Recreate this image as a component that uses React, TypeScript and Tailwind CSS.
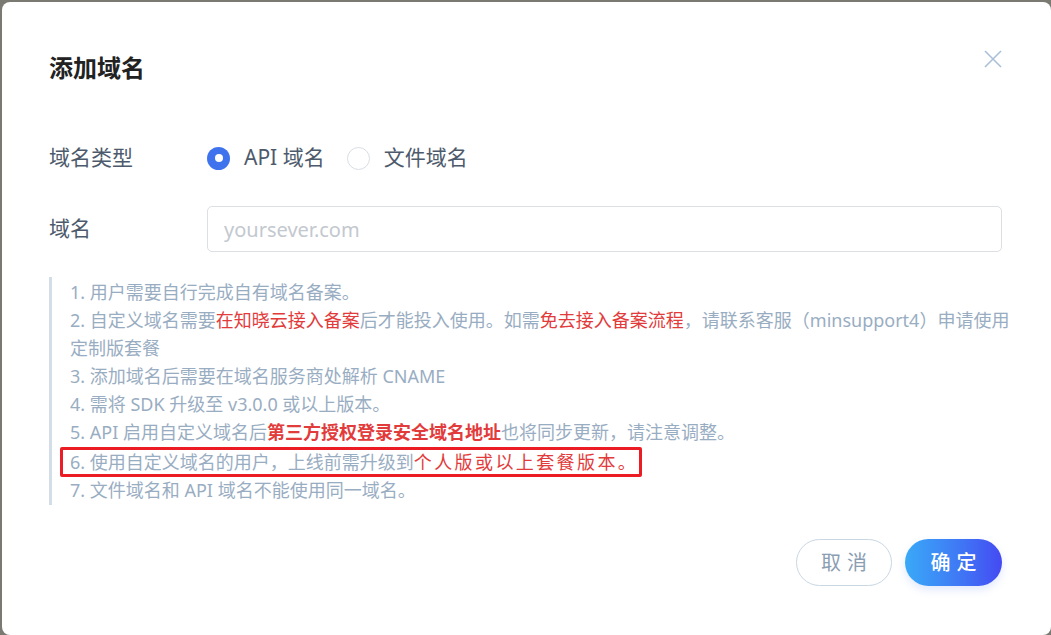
import React from "react";

const font = { fontFamily: '"Noto Sans", "Noto Sans CJK SC", sans-serif' };

function Radio({ checked }: { checked?: boolean }) {
  if (checked) {
    return (
      <span className="flex h-[23px] w-[23px] items-center justify-center rounded-full bg-[#3f73ee]">
        <span className="h-[8px] w-[8px] rounded-full bg-white" />
      </span>
    );
  }
  return <span className="h-[23px] w-[23px] rounded-full border border-[#d9dde3] bg-white" />;
}

export default function App() {
  return (
    <div className="h-[635px] w-[1051px] bg-[#7a7a72] pl-[2px] pt-[2px]" style={font}>
      <div className="flex h-[633px] w-[1049px] flex-col rounded-[8px] bg-white pl-[47px] pr-[49px] pt-[51px]">
        <div className="flex items-start justify-between">
          <h1 className="text-[24px] font-bold leading-[30px] text-[#222]">添加域名</h1>
          <svg width="18" height="18" viewBox="0 0 18 18" className="-mt-[3px]">
            <path d="M1 1L17 17M17 1L1 17" stroke="#a9c0d8" strokeWidth="1.6" />
          </svg>
        </div>

        <div className="mt-[55px] flex h-[40px] items-center">
          <span className="w-[158px] text-[21px] text-[#4d5a6c]">域名类型</span>
          <label className="flex items-center">
            <Radio checked />
            <span className="ml-[14px] text-[21px] text-[#4d5a6c]">API 域名</span>
          </label>
          <label className="ml-[22px] flex items-center">
            <Radio />
            <span className="ml-[14px] text-[21px] text-[#4d5a6c]">文件域名</span>
          </label>
        </div>

        <div className="mt-[28px] flex items-center">
          <span className="w-[158px] text-[21px] text-[#4d5a6c]">域名</span>
          <input
            placeholder="yoursever.com"
            className="h-[46px] flex-1 rounded-[5px] border border-[#dcdfe3] px-[16px] text-[20px] outline-none placeholder:text-[#c3c8cf]"
          />
        </div>

        <div className="mt-[25px] border-l-[3px] border-[#d3dde8] py-[1px] pl-[18px] text-[18px] leading-[28px] text-[#99adc2]">
          <p>1. 用户需要自行完成自有域名备案。</p>
          <p className="whitespace-nowrap">
            2. 自定义域名需要<span className="text-[#e23b3b]">在知晓云接入备案</span>后才能投入使用。如需
            <span className="text-[#e23b3b]">免去接入备案流程</span>，请联系客服（minsupport4）申请使用
            <br />
            定制版套餐
          </p>
          <p>3. 添加域名后需要在域名服务商处解析 CNAME</p>
          <p>4. 需将 SDK 升级至 v3.0.0 或以上版本。</p>
          <p>
            5. API 启用自定义域名后<span className="font-bold text-[#e23b3b]">第三方授权登录安全域名地址</span>
            也将同步更新，请注意调整。
          </p>
          <p className="relative mt-[2px] w-fit">
            6. 使用自定义域名的用户，上线前需升级到
            <span className="tracking-[2.4px] text-[#e23b3b]">个人版或以上套餐版本。</span>
            <span className="absolute -bottom-[1px] -left-[10px] -right-[4px] -top-[1px] rounded-[2px] border-[3px] border-[#ec1c24]" />
          </p>
          <p>7. 文件域名和 API 域名不能使用同一域名。</p>
        </div>

        <div className="mt-[34px] flex justify-end gap-[13px]">
          <button className="h-[47px] w-[96px] rounded-full border border-[#c9d7e3] bg-white pl-[6px] text-[20px] tracking-[6px] text-[#8b9db2]">
            取消
          </button>
          <button className="h-[47px] w-[97px] rounded-full bg-gradient-to-r from-[#3aa9f7] to-[#4449f2] pl-[6px] text-[20px] font-medium tracking-[6px] text-white shadow-[0_4px_8px_rgba(60,110,240,0.15)]">
            确定
          </button>
        </div>
      </div>
    </div>
  );
}
